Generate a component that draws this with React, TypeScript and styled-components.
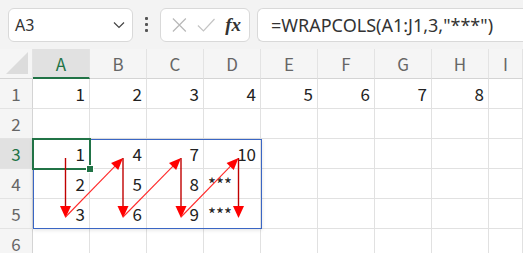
import styled, { createGlobalStyle } from 'styled-components'

const GlobalStyle = createGlobalStyle`
  html, body {
    margin: 0;
    padding: 0;
    background: #ffffff;
    overflow: hidden;
  }
  body {
    font-family: "Noto Sans CJK JP", "Noto Sans", sans-serif;
    color: #222;
  }
`

const columns = ['A', 'B', 'C', 'D', 'E', 'F', 'G', 'H', 'I']
const rows = [1, 2, 3, 4, 5, 6]

const values: Record<string, string> = {
  A1: '1', B1: '2', C1: '3', D1: '4', E1: '5', F1: '6', G1: '7', H1: '8',
  A3: '1', B3: '4', C3: '7', D3: '10',
  A4: '2', B4: '5', C4: '8', D4: '***',
  A5: '3', B5: '6', C5: '9', D5: '***',
}

const ARROW_XS = [65.5, 123, 181, 238.5]
const ARROW_TOP = 158
const ARROW_BOTTOM = 218

export default function App() {
  return (
    <Page>
      <GlobalStyle />
      <Toolbar>
        <NameBox>
          <span>A3</span>
          <Chevron viewBox='0 0 12 8'>
            <path d='M1 1.5 L6 6.5 L11 1.5' fill='none' stroke='#444' strokeWidth='1.2' />
          </Chevron>
        </NameBox>
        <Dots>
          <i />
          <i />
          <i />
        </Dots>
        <FormulaButtons>
          <svg width='16' height='16' viewBox='0 0 16 16'>
            <path d='M1 1 L15 15 M15 1 L1 15' stroke='#b8b8b8' strokeWidth='1.3' />
          </svg>
          <svg width='20' height='16' viewBox='0 0 20 16'>
            <path d='M1 8.5 L7 14.5 L19 1.5' fill='none' stroke='#c4c4c4' strokeWidth='1.3' />
          </svg>
          <Fx>fx</Fx>
        </FormulaButtons>
        <FormulaInput>=WRAPCOLS(A1:J1,3,"***")</FormulaInput>
      </Toolbar>

      <Sheet>
        <Corner>
          <svg width='22' height='22' viewBox='0 0 22 22'>
            <path d='M22 0 L22 22 L0 22 Z' fill='#dcdcdc' />
          </svg>
        </Corner>
        {columns.map(c => (
          <ColHeader key={c} $active={c === 'A'}>{c}</ColHeader>
        ))}
        {rows.map(r => (
          <Row key={r}>
            <RowHeader $active={r === 3}>{r}</RowHeader>
            {columns.map(c => {
              const v = values[c + r] ?? ''
              return (
                <Cell key={c} $text={v === '***'}>
                  {v}
                </Cell>
              )
            })}
          </Row>
        ))}
      </Sheet>

      <SpillRange />
      <Selection>
        <FillHandle />
      </Selection>

      <Arrows width='523' height='253' viewBox='0 0 523 253'>
        {ARROW_XS.map((x, i) => (
          <g key={i}>
            <line x1={x} y1={ARROW_TOP} x2={x} y2={ARROW_BOTTOM - 8} stroke='#c00000' strokeWidth='1.4' />
            <polygon
              points={`${x - 5.5},${ARROW_BOTTOM - 12} ${x + 5.5},${ARROW_BOTTOM - 12} ${x},${ARROW_BOTTOM}`}
              fill='#ff0000'
            />
            {i < ARROW_XS.length - 1 && (
              <DiagonalArrow x1={x} y1={ARROW_BOTTOM - 1} x2={ARROW_XS[i + 1]} y2={ARROW_TOP} />
            )}
          </g>
        ))}
      </Arrows>
    </Page>
  )
}

function DiagonalArrow({ x1, y1, x2, y2 }: { x1: number; y1: number; x2: number; y2: number }) {
  const len = Math.hypot(x2 - x1, y2 - y1)
  const ux = (x2 - x1) / len
  const uy = (y2 - y1) / len
  const head = 12
  const half = 5
  const bx = x2 - ux * head
  const by = y2 - uy * head
  const px = -uy
  const py = ux
  return (
    <>
      <line x1={x1} y1={y1} x2={bx + ux * 2} y2={by + uy * 2} stroke='#ff2a2a' strokeWidth='1.1' />
      <polygon
        points={`${x2},${y2} ${bx + px * half},${by + py * half} ${bx - px * half},${by - py * half}`}
        fill='#ff0000'
      />
    </>
  )
}

const Page = styled.div`
  position: relative;
  width: 523px;
  height: 253px;
  overflow: hidden;
  background: #ffffff;
`

const Toolbar = styled.div`
  display: flex;
  align-items: center;
  height: 49px;
  padding: 0 0 0 8px;
  box-sizing: border-box;
  background: #f3f3f3;
`

const NameBox = styled.div`
  display: flex;
  align-items: center;
  justify-content: space-between;
  width: 125px;
  height: 34px;
  padding: 0 7px 0 6px;
  box-sizing: border-box;
  background: #ffffff;
  border: 1px solid #d9d9d9;
  border-radius: 6px;
  font-family: "Noto Sans", sans-serif;
  font-size: 16px;
  color: #333;
`

const Chevron = styled.svg`
  width: 12px;
  height: 8px;
`

const Dots = styled.div`
  display: flex;
  flex-direction: column;
  gap: 3px;
  width: 27px;
  align-items: center;

  i {
    display: block;
    width: 3px;
    height: 3px;
    border-radius: 1px;
    background: #555;
  }
`

const FormulaButtons = styled.div`
  display: flex;
  align-items: center;
  gap: 10px;
  width: 90px;
  height: 34px;
  padding: 0 8px 0 11px;
  box-sizing: border-box;
  background: #ffffff;
  border: 1px solid #d9d9d9;
  border-radius: 6px;
`

const Fx = styled.span`
  margin-left: auto;
  font-family: "Liberation Serif", serif;
  font-style: italic;
  font-weight: bold;
  font-size: 19px;
  color: #333;
`

const FormulaInput = styled.div`
  flex: 1;
  display: flex;
  align-items: center;
  height: 34px;
  margin-left: 7px;
  padding-left: 13px;
  box-sizing: border-box;
  background: #ffffff;
  border: 1px solid #d9d9d9;
  border-right: none;
  border-radius: 6px 0 0 6px;
  font-family: "Noto Sans", sans-serif;
  font-size: 18px;
  color: #333;
  white-space: nowrap;
`

const Sheet = styled.div`
  display: grid;
  grid-template-columns: 33px repeat(8, 57px) 1fr;
  grid-auto-rows: 30px;
`

const Row = styled.div`
  display: contents;
`

const Corner = styled.div`
  display: flex;
  align-items: flex-end;
  justify-content: flex-end;
  padding: 0 4px 4px 0;
  background: #f5f5f5;
  border-right: 1px solid #e3e3e3;
  border-bottom: 1px solid #d4d4d4;
`

const ColHeader = styled.div<{ $active?: boolean }>`
  display: flex;
  align-items: center;
  justify-content: center;
  box-sizing: border-box;
  background: ${p => (p.$active ? '#e1e1e1' : '#f5f5f5')};
  border-right: 1px solid #e3e3e3;
  border-bottom: ${p => (p.$active ? '2px solid #217346' : '1px solid #d4d4d4')};
  color: ${p => (p.$active ? '#217346' : '#666')};
  font-size: 17px;
`

const RowHeader = styled.div<{ $active?: boolean }>`
  display: flex;
  align-items: center;
  justify-content: center;
  box-sizing: border-box;
  background: ${p => (p.$active ? '#e1e1e1' : '#f5f5f5')};
  border-right: 1px solid #d4d4d4;
  border-bottom: 1px solid #e3e3e3;
  color: ${p => (p.$active ? '#217346' : '#666')};
  font-size: 17px;
`

const Cell = styled.div<{ $text?: boolean }>`
  display: flex;
  align-items: flex-end;
  justify-content: ${p => (p.$text ? 'flex-start' : 'flex-end')};
  padding: 0 ${p => (p.$text ? '0' : '4px')} 3px ${p => (p.$text ? '4px' : '0')};
  box-sizing: border-box;
  border-right: 1px solid #e1e1e1;
  border-bottom: 1px solid #e1e1e1;
  font-size: ${p => (p.$text ? '17px' : '17px')};
  line-height: 22px;
  color: #222;
`

const SpillRange = styled.div`
  position: absolute;
  left: 33px;
  top: 139px;
  width: 229px;
  height: 90px;
  box-sizing: border-box;
  border: 1px solid #3a66c4;
  box-shadow: 0 1px 4px rgba(0, 0, 0, 0.12);
  pointer-events: none;
`

const Selection = styled.div`
  position: absolute;
  left: 32px;
  top: 138px;
  width: 59px;
  height: 32px;
  box-sizing: border-box;
  border: 2px solid #217346;
  pointer-events: none;
`

const FillHandle = styled.div`
  position: absolute;
  right: -5px;
  bottom: -5px;
  width: 6px;
  height: 6px;
  background: #217346;
  border: 1px solid #ffffff;
`

const Arrows = styled.svg`
  position: absolute;
  left: 0;
  top: 0;
  pointer-events: none;
`
